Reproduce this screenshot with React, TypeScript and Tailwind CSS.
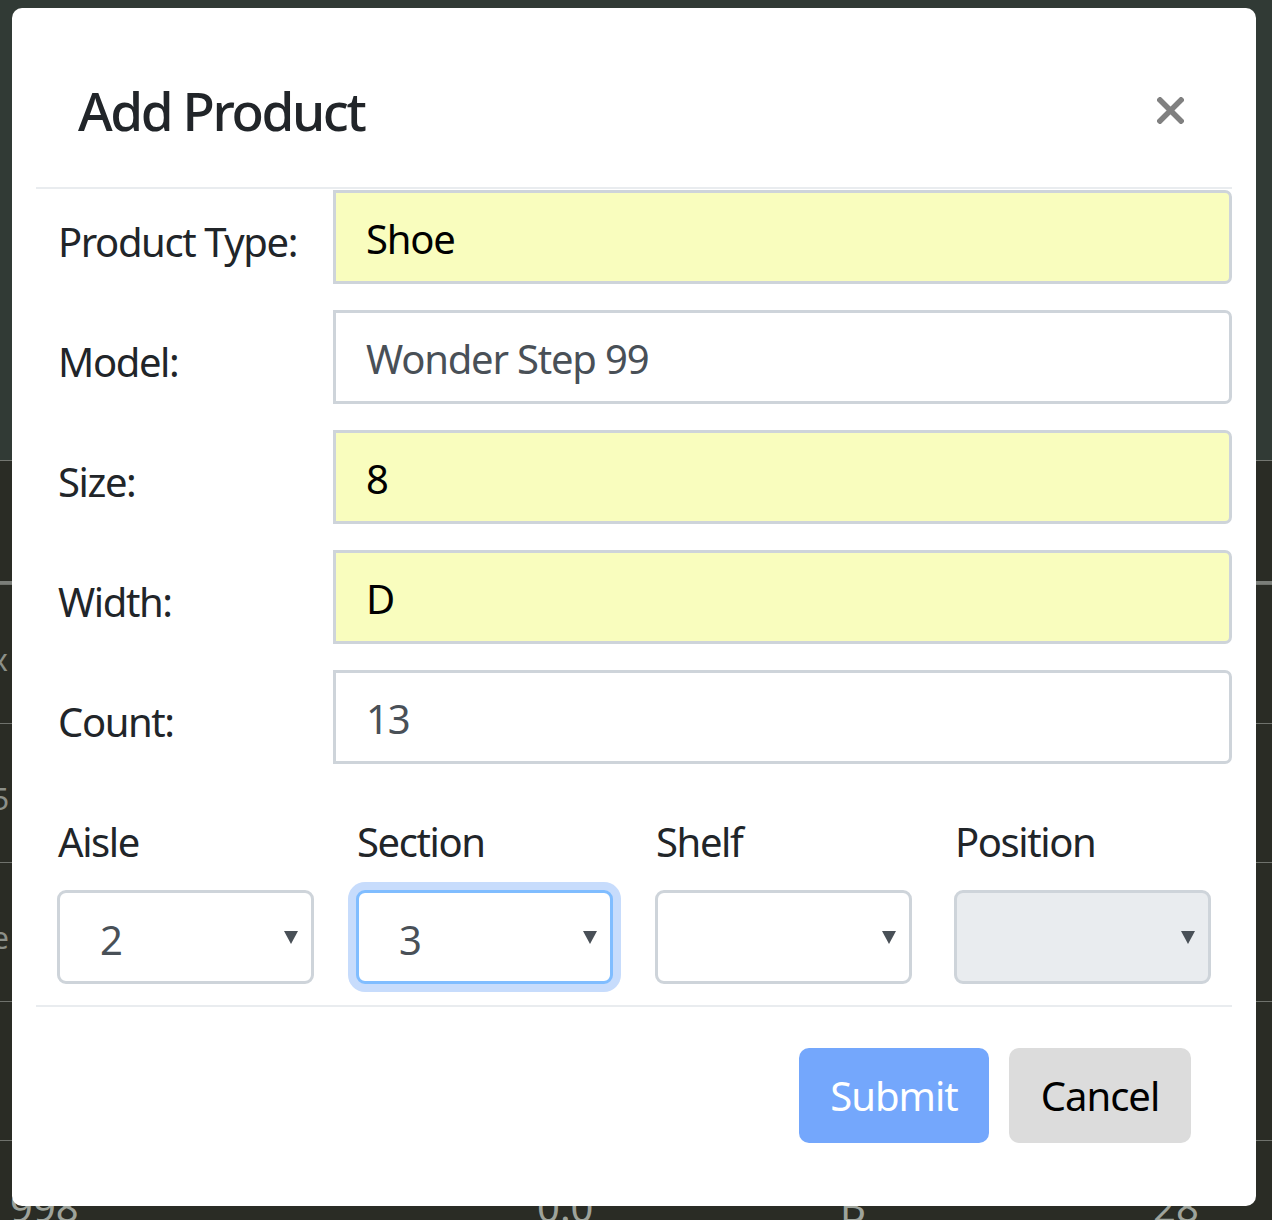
import React from "react";

const FONT = { fontFamily: '"Noto Sans", "Open Sans", sans-serif' };

type Field = { label: string; value: string; required?: boolean };

const FIELDS: Field[] = [
  { label: "Product Type:", value: "Shoe", required: true },
  { label: "Model:", value: "Wonder Step 99" },
  { label: "Size:", value: "8", required: true },
  { label: "Width:", value: "D", required: true },
  { label: "Count:", value: "13" },
];

const LOCATION = [
  { label: "Aisle", value: "2", state: "normal" },
  { label: "Section", value: "3", state: "focus" },
  { label: "Shelf", value: "", state: "normal" },
  { label: "Position", value: "", state: "disabled" },
];

function Caret() {
  return (
    <svg width="14" height="14" viewBox="0 0 14 14" className="shrink-0">
      <polygon points="0,1 14,1 7,14" fill="#495057" />
    </svg>
  );
}

function InputRow({ field }: { field: Field }) {
  return (
    <div className="flex h-[94px]">
      <div className="flex w-[297px] items-center pl-[22px] pt-[10px] text-[40px] tracking-[-1.4px] text-[#212529]">
        {field.label}
      </div>
      <div
        className={`flex flex-1 items-center rounded-r-[7px] border-[3px] border-[#ced4da] pl-[30px] pt-[4px] text-[40px] tracking-[-1.2px] ${
          field.required ? "bg-[#f9fdbe] text-black" : "bg-white text-[#495057]"
        }`}
      >
        {field.value}
      </div>
    </div>
  );
}

function LocationSelect({ item }: { item: (typeof LOCATION)[number] }) {
  const box =
    item.state === "focus"
      ? "border-[#80bdff] shadow-[0_0_0_8px_#c7dcfc] bg-white"
      : item.state === "disabled"
        ? "border-[#ced4da] bg-[#e9ecef]"
        : "border-[#ced4da] bg-white";
  return (
    <div className="flex w-[299px] shrink-0 flex-col">
      <div className="h-[62px] pl-[1px] text-[40px] leading-[56px] tracking-[-1.4px] text-[#212529]">{item.label}</div>
      <div className={`mt-[14px] flex h-[94px] w-[257px] items-center rounded-[9px] border-[3px] pl-[40px] pr-[13px] ${box}`}>
        <span className="flex-1 pt-[5px] text-[40px] text-[#495057]">{item.value}</span>
        <Caret />
      </div>
    </div>
  );
}

export default function App() {
  return (
    <div className="relative h-[1220px] w-[1272px] overflow-hidden bg-[#2a2c25]" style={FONT}>
      {/* page behind the modal */}
      <div className="flex flex-col">
        <div className="h-[461px] border-b border-[#747771] bg-[#313a35]" />
        <div className="h-[123px] border-b-[3px] border-[#7b7e79]" />
        {["x", "5", "e", ""].map((g, i) => (
          <div key={i} className="relative h-[139px] border-t border-[#6f726c] first:border-t-0">
            <span className="absolute left-[-8px] top-[52px] text-[30px] text-[#8c9089]">{g}</span>
          </div>
        ))}
        <div className="flex h-[140px] border-t border-[#6f726c] pl-[10px] pt-[46px] text-[40px] leading-none text-[#9ea39b]">
          <span className="w-[527px] shrink-0">998</span>
          <span className="w-[303px] shrink-0">0.0</span>
          <span className="w-[313px] shrink-0">B</span>
          <span className="shrink-0">28</span>
        </div>
      </div>

      {/* modal */}
      <div className="absolute left-[12px] top-[8px] flex h-[1198px] w-[1244px] flex-col rounded-[10px] bg-white">
        <div className="mx-[24px] box-border flex h-[181px] items-start border-b-2 border-[#e9ecef]">
          <h4 className="pl-[42px] pt-[71px] text-[53px] font-medium leading-[64px] tracking-[-2.4px] text-[#212529]">
            Add Product
          </h4>
          <button className="ml-auto mr-[48px] mt-[89px]" aria-label="Close">
            <svg width="27" height="27" viewBox="0 0 27 27">
              <path d="M3 3 L24 24 M24 3 L3 24" stroke="#808080" strokeWidth="5.5" strokeLinecap="square" />
            </svg>
          </button>
        </div>

        <div className="mx-[24px] flex flex-col gap-[26px] pt-[1px]">
          {FIELDS.map((f) => (
            <InputRow key={f.label} field={f} />
          ))}
        </div>

        <div className="mx-[24px] flex border-b-2 border-[#e9ecef] pb-[21px] pl-[21px] pt-[50px]">
          {LOCATION.map((l) => (
            <LocationSelect key={l.label} item={l} />
          ))}
        </div>

        <div className="flex justify-end gap-[20px] pr-[65px] pt-[41px]">
          <button className="h-[95px] w-[190px] rounded-[10px] bg-[#74a7fc] text-[40px] tracking-[-1px] text-white">
            Submit
          </button>
          <button className="h-[95px] w-[182px] rounded-[10px] bg-[#dcdcdc] text-[40px] tracking-[-1px] text-black">
            Cancel
          </button>
        </div>
      </div>
    </div>
  );
}
